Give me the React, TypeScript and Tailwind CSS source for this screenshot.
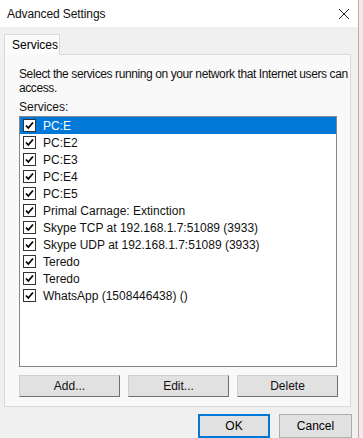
import React from "react";

const items = [
  "PC:E",
  "PC:E2",
  "PC:E3",
  "PC:E4",
  "PC:E5",
  "Primal Carnage: Extinction",
  "Skype TCP at 192.168.1.7:51089 (3933)",
  "Skype UDP at 192.168.1.7:51089 (3933)",
  "Teredo",
  "Teredo",
  "WhatsApp (1508446438) ()",
];

function Check() {
  return (
    <div className="w-[13px] h-[13px] border border-[#333333] bg-white flex items-center justify-center shrink-0">
      <svg width="11" height="11" viewBox="0 0 11 11">
        <path d="M2 5.5 L4.3 8 L9 2.5" fill="none" stroke="#000" strokeWidth="1.8" />
      </svg>
    </div>
  );
}

function Btn({ label }: { label: string }) {
  return (
    <div className="w-[101px] h-[22px] bg-[#e1e1e1] border border-t-[#d0d0d0] border-l-[#d0d0d0] border-r-[#6f6f6f] border-b-[#6f6f6f] flex items-center justify-center text-[#111]">
      {label}
    </div>
  );
}

export default function App() {
  return (
    <div
      className="w-[363px] h-[438px] overflow-hidden flex bg-[#f0f0f0] text-[12px] text-black"
      style={{ fontFamily: '"Liberation Sans", Arial, sans-serif' }}
    >
      <div className="w-[358px] shrink-0 flex flex-col">
        <div className="h-[28px] bg-white flex items-center justify-between pl-[7px] pr-[8px]">
          <span className="text-[12px] tracking-[-0.1px] text-[#111] leading-none">Advanced Settings</span>
          <svg width="12" height="12" viewBox="0 0 12 12">
            <path d="M1 1 L11 11 M11 1 L1 11" stroke="#222" strokeWidth="1" />
          </svg>
        </div>
        <div className="flex-1 flex flex-col px-[4px] pt-[7px]">
          <div className="flex">
            <div className="w-[56px] h-[21px] bg-[#fbfbfb] border border-[#d9d9d9] border-b-0 flex items-center pl-[7px] relative z-10 -mb-px">
              Services
            </div>
          </div>
          <div className="w-[347px] h-[353px] bg-[#f9f9f9] border border-[#dadada] pl-[14px] pt-[12px] flex flex-col">
            <div className="leading-[14px] whitespace-nowrap text-[#111] tracking-[-0.4px]">
              Select the services running on your network that Internet users can
              <br />
              access.
            </div>
            <div className="mt-[5px] leading-[14px] text-[#111]">Services:</div>
            <div className="mt-[2px] w-[318px] h-[251px] bg-white border border-[#828790] flex flex-col">
              {items.map((it, i) => (
                <div
                  key={i}
                  className={
                    "h-[17px] flex items-center pl-[3px] gap-[7px] whitespace-nowrap " +
                    (i === 0 ? "bg-[#0078d7] text-white" : "text-[#111]")
                  }
                >
                  <Check />
                  <span>{it}</span>
                </div>
              ))}
            </div>
            <div className="mt-[8px] flex gap-[8px]">
              <Btn label="Add..." />
              <Btn label="Edit..." />
              <Btn label="Delete" />
            </div>
          </div>
          <div className="mt-[7px] flex justify-end gap-[9px] pr-[2px]">
            <div className="w-[72px] h-[24px] bg-[#e1e1e1] border-2 border-[#0078d7] flex items-center justify-center">
              OK
            </div>
            <div className="w-[73px] h-[24px] bg-[#e1e1e1] border border-[#adadad] flex items-center justify-center">
              Cancel
            </div>
          </div>
        </div>
      </div>
      <div className="w-[1px] bg-[#d9a0a0]" />
      <div className="flex-1 bg-[#ececec]" />
    </div>
  );
}
